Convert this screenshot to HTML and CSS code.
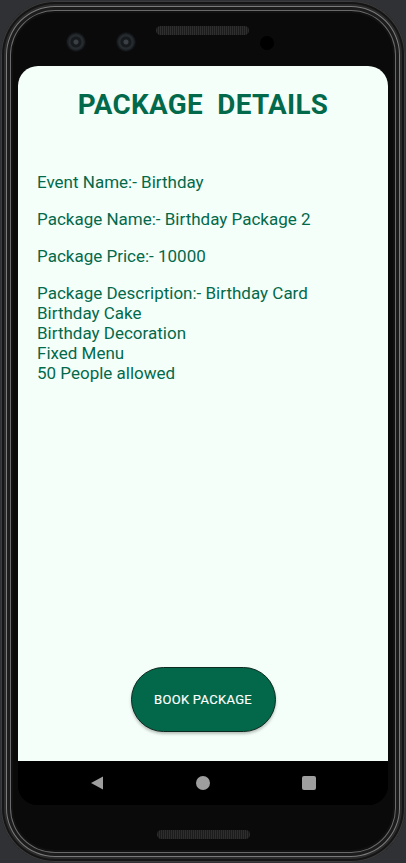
FILE: index.html
```html
<!DOCTYPE html>
<html>
<head>
<meta charset="utf-8">
<link rel="stylesheet" href="styles.css">
</head>
<body>
<div class="phone">
  <div class="hardware-top">
    <span class="camera cam-1"></span>
    <span class="camera cam-2"></span>
    <span class="speaker"></span>
    <span class="sensor"></span>
  </div>
  <div class="device-screen">
    <div class="app">
      <h1 class="title">PACKAGE&nbsp; DETAILS</h1>
      <div class="details">
        <p class="row">Event Name:- Birthday</p>
        <p class="row">Package Name:- Birthday Package 2</p>
        <p class="row">Package Price:- 10000</p>
        <p class="row">Package Description:- Birthday Card<br>Birthday Cake<br>Birthday Decoration<br>Fixed Menu<br>50 People allowed</p>
      </div>
      <button class="book-btn">BOOK PACKAGE</button>
    </div>
    <div class="navbar">
      <svg class="nav-icon" width="14" height="14" viewBox="0 0 14 14"><path d="M13 0.5 L13 13.5 L1 7 Z" fill="#9e9e9e"/></svg>
      <svg class="nav-icon" width="14" height="14" viewBox="0 0 14 14"><circle cx="7" cy="7" r="7" fill="#9e9e9e"/></svg>
      <svg class="nav-icon" width="14" height="14" viewBox="0 0 14 14"><rect x="0" y="0" width="14" height="14" rx="2" fill="#9e9e9e"/></svg>
    </div>
  </div>
  <div class="hardware-bottom">
    <span class="speaker speaker-bottom"></span>
  </div>
</div>
</body>
</html>
```
FILE: styles.css
```css
html, body {
  margin: 0;
  padding: 0;
}
body {
  background: #2f3134;
  width: 406px;
  height: 863px;
  overflow: hidden;
  font-family: Roboto, "Liberation Sans", sans-serif;
}
.phone {
  box-sizing: border-box;
  margin: 1px 1px 0 1px;
  width: 404px;
  height: 861px;
  border-radius: 54px;
  background: #0a0a0a;
  box-shadow:
    inset 0 0 0 1px #3c3c3c,
    inset 0 0 0 3px #151515,
    inset 0 0 0 5px #2b2b2b,
    inset 0 0 0 6px #7a7a7a,
    inset 0 0 0 9px #1c1c1c,
    inset 0 0 0 10px #6a6a6a,
    inset 0 0 0 12px #111;
  display: flex;
  flex-direction: column;
  align-items: center;
}
.hardware-top {
  height: 65px;
  width: 100%;
  display: flex;
  align-items: flex-start;
  box-sizing: border-box;
  padding-left: 66px;
}
.camera {
  width: 18px;
  height: 18px;
  border-radius: 50%;
  margin-top: 32px;
  background: radial-gradient(circle at 50% 50%, #3a4046 0 2px, #161a1d 3px 5px, #262b30 6px 7px, #1c2024 8px);
  box-shadow: 0 0 0 1px #101214;
}
.cam-2 {
  margin-left: 32px;
}
.speaker {
  width: 93px;
  height: 9px;
  border-radius: 5px;
  background-color: #222;
  background-image: repeating-linear-gradient(90deg, #2e2e2e 0 1px, #1c1c1c 1px 2px);
}
.hardware-top .speaker {
  margin-left: 21px;
  margin-top: 25px;
}
.sensor {
  width: 14px;
  height: 14px;
  border-radius: 50%;
  background: #000;
  margin-left: 11px;
  margin-top: 35px;
}
.device-screen {
  width: 370px;
  height: 739px;
  border-radius: 20px;
  overflow: hidden;
  display: flex;
  flex-direction: column;
  background: #000;
}
.app {
  height: 695px;
  background: #f4fff9;
  display: flex;
  flex-direction: column;
  align-items: center;
}
.title {
  margin: 23px 0 0;
  font-size: 27.8px;
  font-weight: 700;
  color: #03694b;
  line-height: 32px;
  letter-spacing: 0.3px;
}
.details {
  align-self: stretch;
  padding: 0 19px;
  margin-top: 51px;
  color: #03694b;
  font-size: 17px;
  line-height: 20px;
}
.row {
  margin: 0 0 17px;
}
.book-btn {
  margin-top: auto;
  margin-bottom: 29px;
  width: 145px;
  height: 65px;
  border-radius: 33px;
  border: 1px solid #0d2a20;
  background: #03684a;
  color: #fff;
  font-family: Roboto, "Liberation Sans", sans-serif;
  font-size: 13px;
  font-weight: 400;
  letter-spacing: 0.3px;
  -webkit-text-stroke: 0.15px #fff;
  box-shadow: 0 2px 3px rgba(0,0,0,0.25);
  padding: 0;
}
.navbar {
  height: 44px;
  display: flex;
  align-items: center;
  justify-content: center;
  gap: 92px;
  background: #000;
}
.hardware-bottom {
  flex: 1;
  display: flex;
  justify-content: center;
  align-items: flex-start;
  padding-top: 25px;
}
```
